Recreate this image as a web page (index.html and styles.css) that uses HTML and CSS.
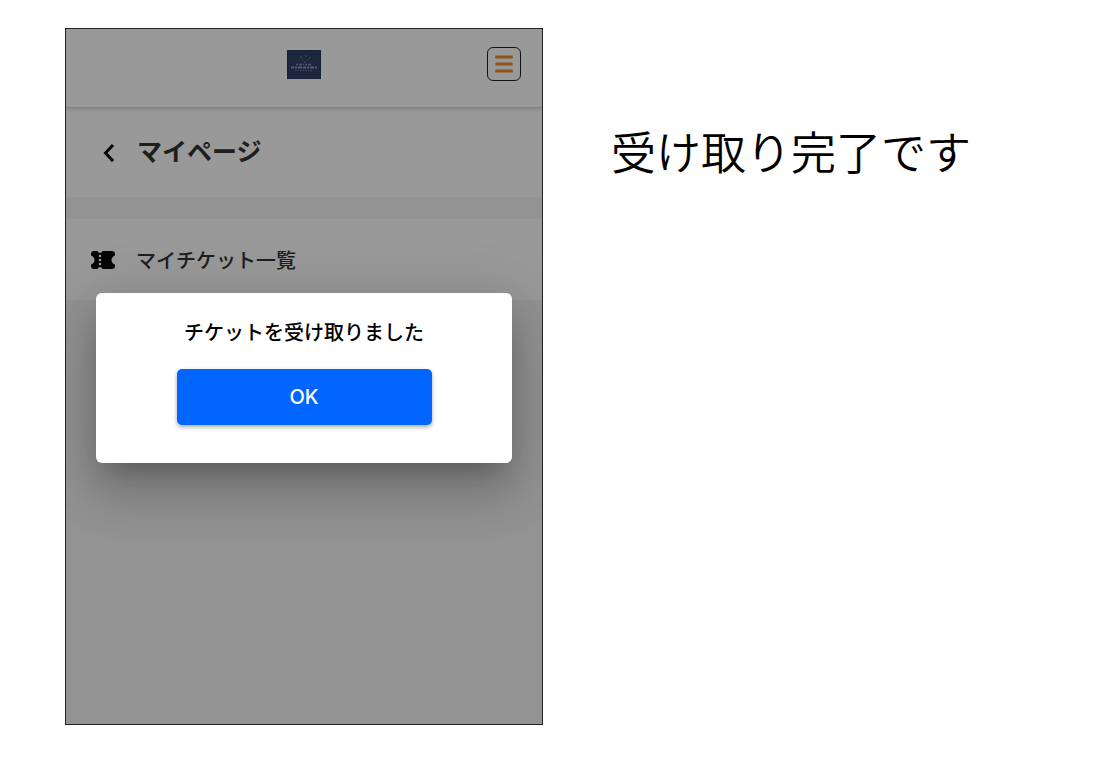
FILE: index.html
```
<!DOCTYPE html>
<html lang="ja">
<head>
<meta charset="utf-8">
<meta name="viewport" content="width=device-width, initial-scale=1">
<title>マイページ</title>
<link rel="stylesheet" href="styles.css">
</head>
<body>
<main class="sheet">
  <section class="phone">
    <header class="topbar">
      <svg class="logo" viewBox="0 0 34 29" aria-hidden="true">
        <rect width="34" height="29" fill="#2b3858"/>
        <rect x="1" y="1" width="32" height="27" fill="#2f4068"/>
        <path d="M13 7h2M18 6h2M22 8h2M15 10h1M20 10h1M17 12h2" stroke="#6f7d9e" stroke-width="1"/>
        <path d="M9 14.500h16" stroke="#8491b0" stroke-width="1.500" stroke-dasharray="2 1 3 1 1 1"/>
        <path d="M4 17.500h26" stroke="#8f9bb8" stroke-width="2" stroke-dasharray="3 1 2 1 4 1"/>
        <path d="M8 20.500h18" stroke="#66759a" stroke-width="1" stroke-dasharray="2 1 1 1"/>
      </svg>
      <button class="menu" type="button" aria-label="メニュー">
        <svg viewBox="0 0 18 18" aria-hidden="true"><path d="M1.500 2h15M1.500 9h15M1.500 16h15" stroke="#f08a28" stroke-width="3" stroke-linecap="round"/></svg>
      </button>
    </header>
    <div class="title-row">
      <a class="back" href="#" aria-label="戻る">
        <svg viewBox="0 0 12 18" aria-hidden="true"><path d="M10 1L2.500 9l7.500 8" fill="none" stroke="#000" stroke-width="3"/></svg>
      </a>
      <h1 class="title">マイページ</h1>
    </div>
    <a class="ticket-row" href="#">
      <svg class="ticket" viewBox="0 0 24 18" aria-hidden="true">
        <path d="M3 0H6.500Q7 2 9 2T11.500 0H21Q24 0 24 3V4.500Q20.500 6 20.500 9T24 13.500V15Q24 18 21 18H11.500Q11 16 9 16T6.500 18H3Q0 18 0 15V13.500Q3.500 12 3.500 9T0 4.500V3Q0 0 3 0Z" fill="#0b0b0b"/>
        <circle cx="9" cy="5" r="1.300" fill="#fff"/><circle cx="9" cy="9" r="1.300" fill="#fff"/><circle cx="9" cy="13" r="1.300" fill="#fff"/>
      </svg>
      <span>マイチケット一覧</span>
    </a>
    <div class="overlay">
      <div class="dialog" role="dialog" aria-labelledby="message">
        <p class="message" id="message">チケットを受け取りました</p>
        <button class="ok" type="button">OK</button>
      </div>
    </div>
  </section>
  <h2 class="caption">受け取り完了です</h2>
</main>
</body>
</html>
```
FILE: styles.css
```
* {
  box-sizing: border-box;
}

body {
  margin: 0;
  background: #fff;
  color: #000;
  font-family: "Noto Sans CJK JP", sans-serif;
}

.sheet {
  display: flex;
  gap: 68px;
  min-height: 100vh;
  padding: 28px 65px 57px;
}

.phone {
  position: relative;
  flex: 0 1 478px;
  overflow: hidden;
  border: 1px solid #222;
  background: #f6f6f6;
}

.topbar {
  position: relative;
  display: grid;
  grid-template-columns: 1fr auto 1fr;
  align-items: center;
  height: 78px;
  padding: 0 21px 8px;
  background: #fff;
  box-shadow: 0 1px 4px rgba(0, 0, 0, 0.25);
}

.logo {
  grid-column: 2;
  width: 34px;
  height: 29px;
}

.menu {
  display: grid;
  place-items: center;
  justify-self: end;
  width: 34px;
  height: 34px;
  padding: 0;
  border: 1px solid #222;
  border-radius: 6px;
  background: #fff;
}

.menu svg {
  width: 18px;
  height: 18px;
}

.title-row {
  display: flex;
  align-items: center;
  gap: 22px;
  height: 90px;
  padding: 0 37px 4px;
  background: #fff;
}

.back {
  display: flex;
  padding-top: 6px;
}

.back svg {
  width: 12px;
  height: 18px;
}

.title {
  margin: 0;
  color: #333;
  font-size: 25px;
  font-weight: 700;
  line-height: 36px;
}

.ticket-row {
  display: flex;
  align-items: center;
  gap: 21px;
  height: 81px;
  margin-top: 22px;
  padding: 0 25px;
  background: #fff;
  color: #333;
  font-size: 20px;
  font-weight: 500;
  line-height: 30px;
  text-decoration: none;
}

.ticket {
  width: 24px;
  height: 18px;
}

.overlay {
  position: absolute;
  inset: 0;
  display: grid;
  place-items: center;
  padding: 2px 30px 0;
  background: rgba(0, 0, 0, 0.4);
}

.dialog {
  display: flex;
  flex-direction: column;
  align-items: center;
  gap: 22px;
  width: 100%;
  padding: 24px 30px 38px;
  border-radius: 6px;
  background: #fff;
  box-shadow: 0 16px 22px -10px rgba(0, 0, 0, 0.2), 0 30px 50px 4px rgba(0, 0, 0, 0.14), 0 12px 60px 10px rgba(0, 0, 0, 0.12);
}

.message {
  margin: 0;
  font-size: 20px;
  font-weight: 500;
  line-height: 30px;
}

.ok {
  width: 255px;
  max-width: 100%;
  height: 56px;
  padding: 0;
  border: 0;
  border-radius: 5px;
  background: #06f;
  box-shadow: 0 2px 4px rgba(0, 0, 0, 0.35);
  color: #fff;
  font-family: Inter, "Noto Sans CJK JP", sans-serif;
  font-size: 20px;
  font-weight: 500;
}

.caption {
  margin: 90px 0 0;
  font-size: 45px;
  font-weight: 350;
  line-height: 66px;
}
```
